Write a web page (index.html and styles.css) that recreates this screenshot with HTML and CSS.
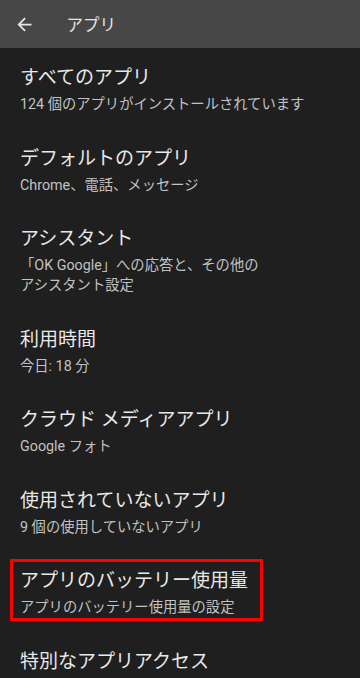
FILE: index.html
```html
<!DOCTYPE html>
<html>
<head lang="ja">
    <meta charset="UTF-8">
    <title>アプリ</title>
    <link rel="stylesheet" href="styles.css">
</head>
<body>
    <div class="bar">
        <svg class="back" viewBox="0 0 24 24" width="21" height="21">
            <path d="M20 11H7.83l5.59-5.59L12 4l-8 8 8 8 1.41-1.41L7.83 13H20v-2z" fill="#e8e8e8"/>
        </svg>
        <div class="bar-title">アプリ</div>
    </div>

    <div class="list">
        <div class="item">
            <div class="title">すべてのアプリ</div>
            <div class="sub">124 個のアプリがインストールされています</div>
        </div>
        <div class="item">
            <div class="title">デフォルトのアプリ</div>
            <div class="sub">Chrome、電話、メッセージ</div>
        </div>
        <div class="item">
            <div class="title">アシスタント</div>
            <div class="sub">「OK Google」への応答と、その他の<br>アシスタント設定</div>
        </div>
        <div class="item">
            <div class="title">利用時間</div>
            <div class="sub">今日: 18 分</div>
        </div>
        <div class="item">
            <div class="title">クラウド メディアアプリ</div>
            <div class="sub">Google フォト</div>
        </div>
        <div class="item">
            <div class="title">使用されていないアプリ</div>
            <div class="sub">9 個の使用していないアプリ</div>
        </div>
        <div class="item">
            <div class="title">アプリのバッテリー使用量</div>
            <div class="sub">アプリのバッテリー使用量の設定</div>
            <div class="mark"></div>
        </div>
        <div class="item">
            <div class="title">特別なアプリアクセス</div>
        </div>
    </div>
</body>
</html>
```

FILE: styles.css
```css
html, body{
    margin: 0;
    padding: 0;
    background-color: #1f1f1f;
    font-family: Roboto, "Noto Sans CJK JP", sans-serif;
    overflow: hidden;
    height: 678px;
}
.bar{
    display: flex;
    align-items: center;
    height: 48px;
    background-color: #474747;
}
.back{
    margin-left: 13.5px;
    display: block;
}
.bar-title{
    margin-left: 32px;
    font-size: 16.5px;
    color: #e4e4e4;
}
.item{
    position: relative;
    padding: 16px 20px 14.5px;
}
.title{
    font-size: 19px;
    line-height: 28px;
    margin-bottom: 2px;
    color: #e8e8e8;
    white-space: nowrap;
}
.sub{
    font-size: 14.3px;
    line-height: 20px;
    color: #c2c2c2;
    white-space: nowrap;
}
.mark{
    position: absolute;
    left: 10px;
    top: 8px;
    width: 247px;
    height: 56px;
    border: 3px solid #ff0000;
}
```
